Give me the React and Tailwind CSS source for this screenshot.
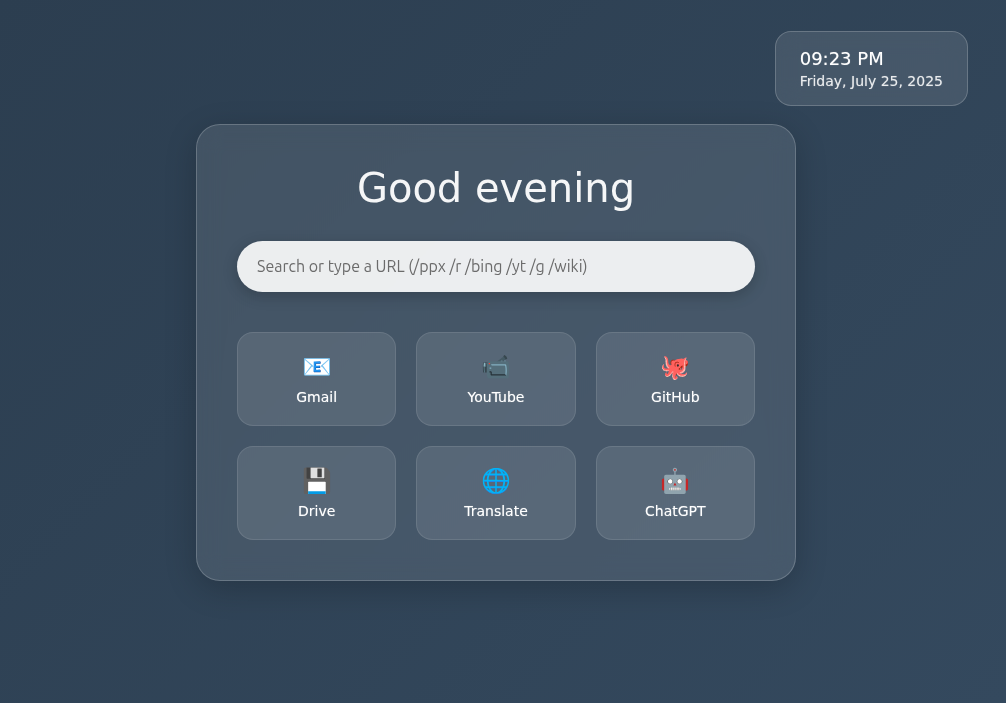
const links = [
  { name: 'Gmail', icon: '📧', href: 'https://mail.google.com' },
  { name: 'YouTube', icon: '📹', href: 'https://youtube.com' },
  { name: 'GitHub', icon: '🐙', href: 'https://github.com' },
  { name: 'Drive', icon: '💾', href: 'https://drive.google.com' },
  { name: 'Translate', icon: '🌐', href: 'https://translate.google.com' },
  { name: 'ChatGPT', icon: '🤖', href: 'https://chat.openai.com' },
];

function Clock() {
  return (
    <div className="absolute top-[31px] right-[38px] rounded-2xl border border-white/20 bg-white/10 px-6 pt-4 pb-[13px] font-medium backdrop-blur-md text-shadow-[0_0_1px_rgba(255,255,255,0.5)]">
      <div className="text-lg leading-[22px] text-white">09:23 PM</div>
      <div className="text-sm leading-[22px] text-white/80">Friday, July 25, 2025</div>
    </div>
  );
}

function QuickLink({ name, icon, href }) {
  return (
    <a
      href={href}
      className="flex flex-col items-center rounded-2xl border border-white/10 bg-white/10 px-4 pt-4 pb-5 text-white"
    >
      <span aria-hidden="true" className="mb-1 text-2xl leading-9">{icon}</span>
      <span className="text-sm leading-4 font-medium text-shadow-[0_0_1px_rgba(255,255,255,0.5)]">{name}</span>
    </a>
  );
}

export default function App() {
  return (
    <div className="relative flex min-h-screen items-center justify-center bg-linear-135 from-[#2c3e50] to-[#34495e] pt-0.5 pr-[14px] font-['DejaVu_Sans',sans-serif]">
      <Clock />
      <main className="w-full max-w-[600px] rounded-3xl border border-white/20 bg-white/10 p-10 shadow-[0_8px_32px_rgba(0,0,0,0.2)] backdrop-blur-md">
        <h1 className="mb-[30px] text-center text-[40px] leading-[46px] font-normal text-white/95">
          Good evening
        </h1>
        <input
          type="text"
          aria-label="Search"
          placeholder="Search or type a URL (/ppx /r /bing /yt /g /wiki)"
          className="mb-10 block h-[51px] w-full rounded-full bg-white/90 px-5 pb-0.5 font-['Ubuntu','Open_Sans',sans-serif] text-base font-normal text-[#333] shadow-[0_4px_15px_rgba(0,0,0,0.2)] outline-none placeholder:text-[#6b6b6b]"
        />
        <nav className="grid grid-cols-3 gap-5">
          {links.map((link) => (
            <QuickLink key={link.name} {...link} />
          ))}
        </nav>
      </main>
    </div>
  );
}
